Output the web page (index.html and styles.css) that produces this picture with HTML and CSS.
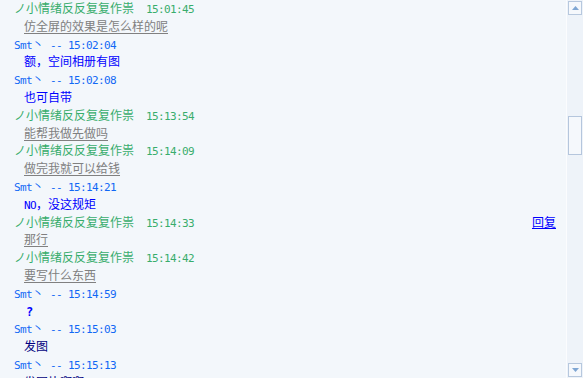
FILE: index.html
```html
<!DOCTYPE html>
<html lang="zh">
<head>
<meta charset="utf-8">
<link rel="stylesheet" href="styles.css">
</head>
<body>
<div class="frame">
  <div class="log">
    <div class="hd g"><span class="nm">ノ小情绪反反复复作祟</span><span class="lat t">15:01:45</span></div>
    <div class="msg gray">仿全屏的效果是怎么样的呢</div>
    <div class="hd b"><span class="lat">Smt</span>丶<span class="lat t2">-- 15:02:04</span></div>
    <div class="msg blue">额，空间相册有图</div>
    <div class="hd b"><span class="lat">Smt</span>丶<span class="lat t2">-- 15:02:08</span></div>
    <div class="msg blue">也可自带</div>
    <div class="hd g"><span class="nm">ノ小情绪反反复复作祟</span><span class="lat t">15:13:54</span></div>
    <div class="msg gray">能帮我做先做吗</div>
    <div class="hd g"><span class="nm">ノ小情绪反反复复作祟</span><span class="lat t">15:14:09</span></div>
    <div class="msg gray">做完我就可以给钱</div>
    <div class="hd b"><span class="lat">Smt</span>丶<span class="lat t2">-- 15:14:21</span></div>
    <div class="msg blue"><span class="lat">NO</span>，没这规矩</div>
    <div class="hd g row"><span><span class="nm">ノ小情绪反反复复作祟</span><span class="lat t">15:14:33</span></span><a class="reply" href="#">回复</a></div>
    <div class="msg gray">那行</div>
    <div class="hd g"><span class="nm">ノ小情绪反反复复作祟</span><span class="lat t">15:14:42</span></div>
    <div class="msg gray">要写什么东西</div>
    <div class="hd b"><span class="lat">Smt</span>丶<span class="lat t2">-- 15:14:59</span></div>
    <div class="msg blue"><span class="lat q">?</span></div>
    <div class="hd b"><span class="lat">Smt</span>丶<span class="lat t2">-- 15:15:03</span></div>
    <div class="msg navy">发图</div>
    <div class="hd b"><span class="lat">Smt</span>丶<span class="lat t2">-- 15:15:13</span></div>
    <div class="msg navy">发图片啊啊</div>
  </div>
  <div class="sbar">
    <div class="sbtn"><svg width="7" height="4" viewBox="0 0 7 4"><path d="M3.5 0 L7 4 L0 4 Z" fill="#7fa6d3"/></svg></div>
    <div class="track">
      <div class="pre"></div>
      <div class="thumb"></div>
      <div class="post"></div>
    </div>
    <div class="sbtn"><svg width="7" height="4" viewBox="0 0 7 4"><path d="M0 0 L7 0 L3.5 4 Z" fill="#7fa6d3"/></svg></div>
  </div>
</div>
</body>
</html>
```

FILE: styles.css
```css
html, body {
  margin: 0;
  padding: 0;
  background: #f3f7fb;
  overflow: hidden;
}
.frame {
  display: flex;
  width: 583px;
  height: 378px;
  overflow: hidden;
}
.log {
  flex: 1;
  padding: 0 10px 0 14px;
  margin-top: -1px;
  font-family: "Noto Sans CJK SC", "Liberation Sans", sans-serif;
  font-size: 12px;
}
.hd, .msg {
  height: 17.8px;
  line-height: 17.8px;
  white-space: nowrap;
}
.msg {
  padding-left: 10px;
}
.lat {
  font-family: "DejaVu Sans Mono", "Liberation Mono", monospace;
  font-size: 11px;
  letter-spacing: -0.62px;
}
.g { color: #38ad6c; }
.b { color: #1168f5; }
.t { margin-left: 12px; }
.t2 { margin-left: 6px; }
.gray {
  color: #808080;
  text-decoration: underline;
  text-underline-offset: 2px;
}
.blue { color: #0000ff; }
.navy { color: #000080; }
.q { font-weight: bold; font-size: 12px; padding-left: 2px; }
.row {
  display: flex;
  justify-content: space-between;
}
.reply {
  color: #0000ff;
  text-decoration: underline;
}
.sbar {
  display: flex;
  flex-direction: column;
  background: #eef3f9;
  border-left: 1px solid #fbfcfe;
  padding: 1px;
  box-sizing: border-box;
  width: 17px;
}
.sbtn {
  border: 1px solid #b7c8de;
  background: #f5f8fc;
  display: flex;
  align-items: center;
  justify-content: center;
  box-sizing: border-box;
  height: 14px;
}
.track {
  flex: 1;
  display: flex;
  flex-direction: column;
}
.pre { height: 101px; }
.thumb {
  height: 39px;
  border: 1px solid #b5c6dd;
  background: #f5f8fc;
  box-sizing: border-box;
}
.post { flex: 1; }
```
